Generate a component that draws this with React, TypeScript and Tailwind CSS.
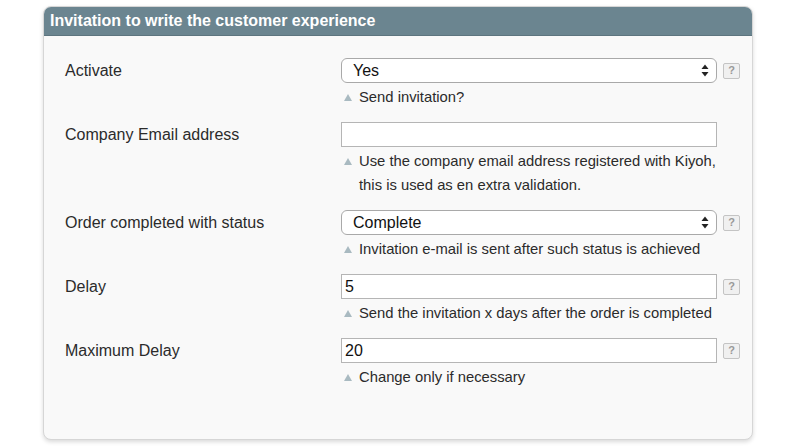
import React from "react";

type Row = {
  label: string;
  kind: "select" | "input";
  value: string;
  hint: string[];
  help: boolean;
};

const rows: Row[] = [
  { label: "Activate", kind: "select", value: "Yes", hint: ["Send invitation?"], help: true },
  {
    label: "Company Email address",
    kind: "input",
    value: "",
    hint: ["Use the company email address registered with Kiyoh,", "this is used as en extra validation."],
    help: false,
  },
  {
    label: "Order completed with status",
    kind: "select",
    value: "Complete",
    hint: ["Invitation e-mail is sent after such status is achieved"],
    help: true,
  },
  { label: "Delay", kind: "input", value: "5", hint: ["Send the invitation x days after the order is completed"], help: true },
  { label: "Maximum Delay", kind: "input", value: "20", hint: ["Change only if necessary"], help: true },
];

function Arrows() {
  return (
    <svg width="8" height="13" viewBox="0 0 8 13" className="text-[#222]">
      <path d="M4 0.5 L7.5 5 H0.5 Z" fill="currentColor" />
      <path d="M4 12.5 L7.5 8 H0.5 Z" fill="currentColor" />
    </svg>
  );
}

function Help() {
  return (
    <div className="ml-[6px] flex h-[16px] w-[17px] items-center justify-center rounded-[2px] border border-[#c4c4c4] bg-[#f0f0f0] text-[11px] font-bold leading-none text-[#999]">
      ?
    </div>
  );
}

function Field({ row }: { row: Row }) {
  return (
    <div className="mb-[13px] flex">
      <div className="flex h-[25px] w-[276px] shrink-0 items-center text-[16px] text-[#2b2b2b]">{row.label}</div>
      <div className="flex flex-col">
        <div className="flex items-center">
          {row.kind === "select" ? (
            <div className="flex h-[25px] w-[376px] items-center justify-between rounded-[6px] border border-[#a9a9a9] bg-white pl-[11px] pr-[7px] text-[16px] text-[#111]">
              <span>{row.value}</span>
              <Arrows />
            </div>
          ) : (
            <div className="flex h-[25px] w-[376px] items-center border border-[#b5b5b5] bg-white pl-[3px] text-[16px] text-[#111]">
              {row.value}
            </div>
          )}
          {row.help && <Help />}
        </div>
        <div className="mt-[2px] flex text-[14.8px] leading-[24px] text-[#2b2b2b]">
          <span className="flex h-[24px] w-[18px] shrink-0 items-center pl-[3px]">
            <svg width="8" height="7" viewBox="0 0 8 7">
              <path d="M4 0 L8 7 H0 Z" fill="#a9bac1" />
            </svg>
          </span>
          <div>
            {row.hint.map((h) => (
              <div key={h}>{h}</div>
            ))}
          </div>
        </div>
      </div>
    </div>
  );
}

export default function App() {
  return (
    <div className="h-[446px] w-[800px] bg-white pl-[43px] pt-[6px]" style={{ fontFamily: '"Liberation Sans", Arial, sans-serif' }}>
      <div className="h-[434px] w-[710px] overflow-hidden rounded-[8px] border border-[#d6d6d6] bg-[#f9f9f9] shadow-[0_2px_4px_rgba(0,0,0,0.15)]">
        <div className="flex h-[29px] items-center border-b border-[#5d757f] bg-[#6b8590] pl-[6px] text-[16px] font-bold text-white">
          Invitation to write the customer experience
        </div>
        <div className="pl-[21px] pt-[22px]">
          {rows.map((r) => (
            <Field key={r.label} row={r} />
          ))}
        </div>
      </div>
    </div>
  );
}
